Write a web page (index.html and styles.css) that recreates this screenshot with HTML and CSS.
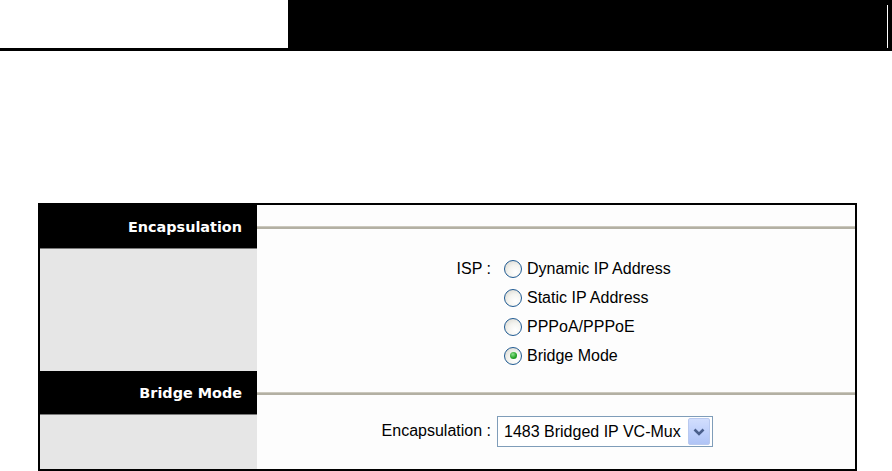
FILE: index.html
```html
<!DOCTYPE html>
<html lang="en">
<head>
  <meta charset="UTF-8" />
  <title>Bridge Mode</title>
  <link rel="stylesheet" href="styles.css">
</head>
<body>
  <div class="topbar">
    <div class="topbar-blank"></div>
    <div class="topbar-dark"><span class="edge"></span></div>
  </div>

  <div class="panel">
    <div class="head-left">Encapsulation</div>
    <div class="head-right"><span class="rule"></span></div>
    <div class="side"></div>
    <div class="content isp">
      <div class="label">ISP :</div>
      <div class="options">
        <label class="option"><span class="radio"></span>Dynamic IP Address</label>
        <label class="option"><span class="radio"></span>Static IP Address</label>
        <label class="option"><span class="radio"></span>PPPoA/PPPoE</label>
        <label class="option"><span class="radio checked"></span>Bridge Mode</label>
      </div>
    </div>

    <div class="head-left">Bridge Mode</div>
    <div class="head-right"><span class="rule"></span></div>
    <div class="side"></div>
    <div class="content encap">
      <div class="label">Encapsulation :</div>
      <div class="select">
        <span class="select-text">1483 Bridged IP VC-Mux</span>
        <span class="select-btn">
          <svg width="14" height="10" viewBox="0 0 14 10">
            <path d="M2.5 2.5 L7 7 L11.5 2.5" fill="none" stroke="#4a5f8c" stroke-width="2.6"/>
          </svg>
        </span>
      </div>
    </div>
  </div>
</body>
</html>
```

FILE: styles.css
```css
* {
  box-sizing: border-box;
}
body {
  margin: 0;
  background: #fff;
  font-family: 'Liberation Sans', Arial, sans-serif;
  font-size: 16px;
  color: #000;
}

.topbar {
  display: flex;
  height: 51px;
  border-bottom: 3px solid #000;
}
.topbar-blank {
  width: 288px;
}
.topbar-dark {
  flex: 1;
  background: #000;
  display: flex;
  justify-content: flex-end;
  padding: 5px 4px 0 0;
}
.topbar-dark .edge {
  width: 1px;
  background: #fff;
}

.panel {
  margin: 152px 0 0 38px;
  width: 819px;
  border: 2px solid #000;
  display: grid;
  grid-template-columns: 217px 1fr;
  grid-template-rows: 44px 122px 44px 54px;
}

.head-left {
  background: #000;
  color: #fff;
  font-family: 'DejaVu Sans', sans-serif;
  font-weight: bold;
  font-size: 14.4px;
  text-align: right;
  padding-right: 15px;
  display: flex;
  align-items: center;
  justify-content: flex-end;
  border-bottom: 1px solid #7a7a7a;
}
.head-right {
  background: #fdfdfd;
  display: flex;
  align-items: center;
}
.head-right .rule {
  width: 100%;
  height: 3px;
  background: #b3b0a3;
  border-top: 1px solid #cbc8bd;
}
.side {
  background: #e6e6e6;
}
.content {
  background: #fdfdfd;
  display: grid;
  grid-template-columns: 234px 1fr;
}
.label {
  text-align: right;
}

.isp {
  padding-top: 5px;
}
.isp .label {
  line-height: 29px;
}
.options {
  padding-left: 13px;
}
.option {
  display: flex;
  align-items: center;
  height: 29px;
}
.radio {
  width: 18px;
  height: 18px;
  border-radius: 50%;
  border: 1.5px solid #1f5a92;
  background: radial-gradient(circle at 65% 70%, #fff 0%, #f4f4f0 45%, #d6d3ca 100%);
  margin-right: 5px;
  display: flex;
  align-items: center;
  justify-content: center;
}
.radio.checked::after {
  content: '';
  width: 7px;
  height: 7px;
  border-radius: 50%;
  background: radial-gradient(circle at 40% 35%, #8fe08f 0%, #21a121 60%, #1a7d1a 100%);
}

.encap {
  padding-top: 1px;
  align-items: start;
}
.encap .label {
  line-height: 30px;
}
.select {
  margin-left: 6px;
  width: 216px;
  height: 31px;
  border: 1px solid #7f9db9;
  background: #fff;
  display: flex;
  align-items: center;
  justify-content: space-between;
  padding: 0 2px 0 6px;
}
.select-btn {
  width: 22px;
  height: 27px;
  border: 1px solid #b9c9ef;
  border-radius: 2px;
  background: linear-gradient(180deg, #d2defd 0%, #bccefb 60%, #b0c4f5 100%);
  display: flex;
  align-items: center;
  justify-content: center;
}
```
